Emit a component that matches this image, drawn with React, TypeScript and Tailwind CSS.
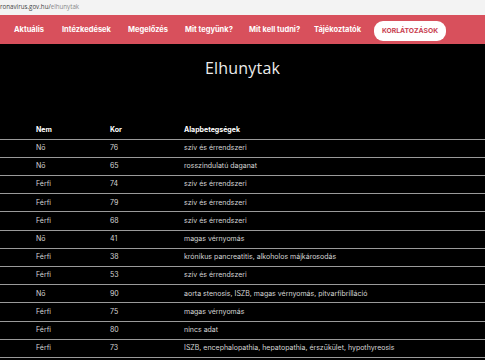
import React from "react";

const rows: [string, string, string][] = [
  ["Nő", "76", "szív és érrendszeri"],
  ["Nő", "65", "rosszindulatú daganat"],
  ["Férfi", "74", "szív és érrendszeri"],
  ["Férfi", "79", "szív és érrendszeri"],
  ["Férfi", "68", "szív és érrendszeri"],
  ["Nő", "41", "magas vérnyomás"],
  ["Férfi", "38", "krónikus pancreatitis, alkoholos májkárosodás"],
  ["Férfi", "53", "szív és érrendszeri"],
  ["Nő", "90", "aorta stenosis, ISZB, magas vérnyomás, pitvarfibrilláció"],
  ["Férfi", "75", "magas vérnyomás"],
  ["Férfi", "80", "nincs adat"],
  ["Férfi", "73", "ISZB, encephalopathia, hepatopathia, érszűkület, hypothyreosis"],
];

const nav = ["Aktuális", "Intézkedések", "Megelőzés", "Mit tegyünk?", "Mit kell tudni?", "Tájékoztatók"];
const navX = [14, 62, 128, 185, 249, 314];

export default function App() {
  return (
    <div className="w-[485px] h-[360px] overflow-hidden bg-black" style={{ fontFamily: "Inter, 'Open Sans', sans-serif" }}>
      <div className="h-[15px] bg-[#f3f3f3] flex items-center text-[6.2px] leading-none text-[#444]" style={{ fontFamily: "'Open Sans', sans-serif" }}>
        <span>ronavirus.gov.hu/</span>
        <span className="text-[#8a8a8a]">elhunytak</span>
      </div>
      <div className="h-[29px] bg-[#d8505c] flex items-center relative">
        {nav.map((n, i) => (
          <span
            key={n}
            className="absolute text-white font-bold text-[7.5px] leading-none"
            style={{ left: navX[i] }}
          >
            {n}
          </span>
        ))}
        <div className="absolute left-[374px] top-[6px] w-[72px] h-[20px] rounded-[9px] bg-white flex items-center justify-center text-[#c8404f] font-bold text-[6.8px] leading-none">
          KORLÁTOZÁSOK
        </div>
      </div>
      <div className="mt-[14px] h-[20px] flex items-center justify-center text-[#ececec] text-[16px] leading-none font-normal tracking-[0.2px]" style={{ fontFamily: "'Open Sans', sans-serif" }}>
        Elhunytak
      </div>
      <div className="mt-[43.5px]">
        <div className="h-[18.2px] flex items-center border-b border-[#9a9a9a] text-white font-bold text-[7px]">
          <span className="pl-[36px] w-[110px]">Nem</span>
          <span className="w-[74px]">Kor</span>
          <span>Alapbetegségek</span>
        </div>
        {rows.map((r, i) => (
          <div key={i} className="h-[18.2px] flex items-center border-b border-[#9a9a9a] text-[#d6d6d6] text-[7px]">
            <span className="pl-[36px] w-[110px]">{r[0]}</span>
            <span className="w-[74px]">{r[1]}</span>
            <span>{r[2]}</span>
          </div>
        ))}
      </div>
    </div>
  );
}
